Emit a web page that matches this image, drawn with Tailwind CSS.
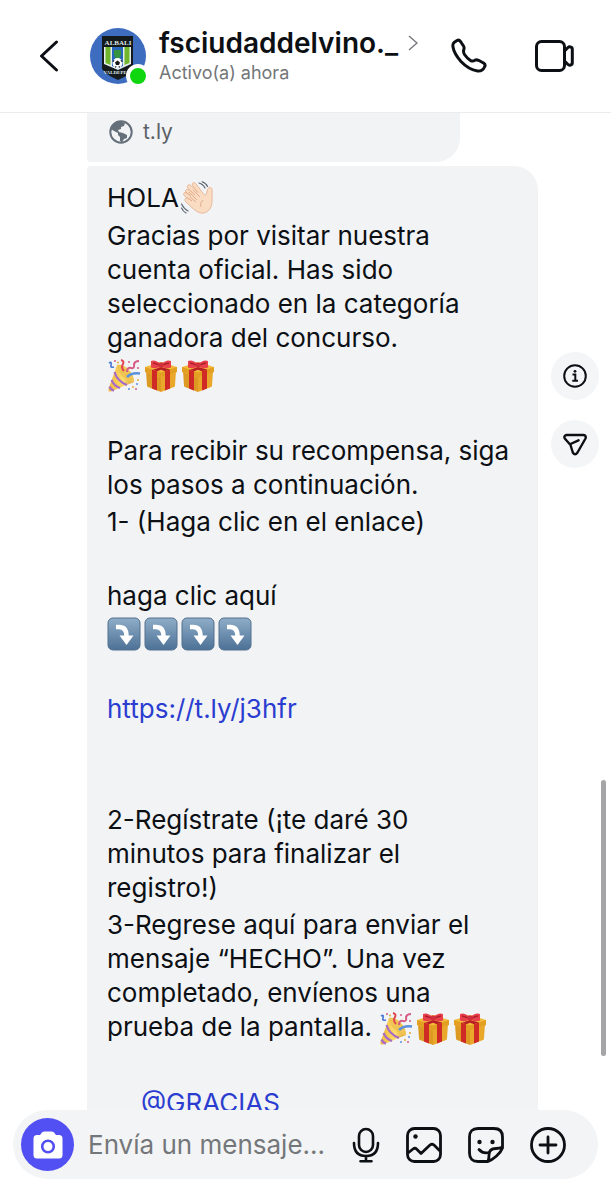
<!DOCTYPE html>
<html lang="es">
  <head>
    <title>fsciudaddelvino._</title>
    <meta charset="UTF-8">
    <meta name="viewport" content="width=device-width, initial-scale=1.0">
    <script src="https://cdn.jsdelivr.net/npm/@tailwindcss/browser@4"></script>
  </head>
  <body class="bg-white text-[#0c1014] font-['Inter','Liberation_Sans',sans-serif]">
    <!-- emoji shapes, used in the messages -->
    <svg class="absolute size-0" aria-hidden="true">
      <defs>
        <linearGradient id="keyFill" x1="0" y1="0" x2="0" y2="1">
          <stop offset="0" stop-color="#8fadc8"/>
          <stop offset="1" stop-color="#4c7196"/>
        </linearGradient>
        <linearGradient id="cone" x1="0" y1="0" x2="1" y2="0">
          <stop offset="0" stop-color="#f3b93a"/>
          <stop offset="0.6" stop-color="#fbdc6e"/>
          <stop offset="1" stop-color="#dc9a2c"/>
        </linearGradient>
        <symbol id="wave" viewBox="0 0 34 34">
          <path d="M10 15L5 11.500Q3.500 9.500 5.500 8.500Q7 8 9 9.500L14 14L7 7.500Q5.500 5.500 7 4Q8.500 3 10.500 5L17 11.500L11.500 4.500Q10.500 2.500 12 1.800Q13.700 1 15 3L23 13.500Q25 15 25.500 12.500L26.500 8.500Q27.300 6 29.500 6.500Q31.500 7 31.200 10L31 19Q31.500 26 27 30Q22 34 16 30.500Q12 28 4.500 20.500Q3 18.500 4.500 17.500Q6 16.500 8 18L11 20L3.500 15Q2 13.500 3 12Q5 10.500 7 12.500Z" fill="#fadcc3" stroke="#e3ad8a" stroke-width="0.800"/>
          <path d="M8 11L16 19M12 9L19 16M9 16L15 21M22 19Q18 22 20 26" fill="none" stroke="#dfa786" stroke-width="0.900"/>
          <path d="M18 2Q22 3 24 7M21 0.800Q25 2 26.500 5.500M0.500 23Q3 28 7 30M0.500 27Q2 30.500 5 32" fill="none" stroke="#5c6670" stroke-width="1.200" stroke-linecap="round"/>
        </symbol>
        <symbol id="party" viewBox="0 0 34 34">
          <path d="M10 6L1.500 30Q1 33 4 32.500L27 23Q26 15 19 9Q14 5 10 6Z" fill="url(#cone)"/>
          <path d="M10 6Q10 12 16 18T27 23Q27 15 20 9Q14 5 10 6Z" fill="#f0c452"/>
          <path d="M7.500 13Q10 22 20 26M4.500 21Q7 27 13 29M2.500 27.500Q4 31 7 31.500" fill="none" stroke="#a66bc9" stroke-width="2.200"/>
          <path d="M2 4Q5 2 4 6Q3 9 7 8" fill="none" stroke="#4d79d8" stroke-width="1.700"/>
          <path d="M14 1Q18 2 15.500 6Q14 9 17 12" fill="none" stroke="#e0454f" stroke-width="2"/>
          <path d="M20 13Q20 8 24 9T27 5Q28 2 32 2" fill="none" stroke="#d75a83" stroke-width="2"/>
          <path d="M20 18Q25 13 33 14.500" fill="none" stroke="#5a91dd" stroke-width="2.500"/>
          <g fill="#d75a83"><circle cx="8" cy="2" r="1"/><circle cx="22" cy="3" r="1"/><circle cx="31" cy="9" r="1"/><circle cx="29" cy="30" r="1"/></g>
          <g fill="#e0ac37"><circle cx="31" cy="21" r="1"/><circle cx="26" cy="28" r="1"/><circle cx="11" cy="3.500" r="1"/></g>
          <g fill="#5a91dd"><circle cx="30" cy="25" r="1"/><circle cx="22" cy="30" r="1"/></g>
        </symbol>
        <symbol id="gift" viewBox="0 0 34 34">
          <path d="M2 12L17 17V33L4 28Q3 27.500 3 26.500Z" fill="#dd9a22"/>
          <path d="M32 12L17 17V33L30 28Q31 27.500 31 26.500Z" fill="#e9a829"/>
          <path d="M1 8L17 3L33 8V13L17 18.500L1 13Z" fill="#f3bb3c"/>
          <path d="M1 8L17 13.500L33 8V13L17 18.500L1 13Z" fill="#e39f22"/>
          <path d="M8 10.500L13 12.200V31.500L8 29.600ZM21 12.200L26 10.500V29.600L21 31.500Z" fill="#cf2a26"/>
          <path d="M17 8L9 10.700L13 12.200L17 10.800L21 12.200L26 10.500Z" fill="#b71f24"/>
          <path d="M17 5Q11 0 7 2V8.500Q12 10.500 17 7Q22 10.500 27 8.500V2Q23 0 17 5Z" fill="#e8414b"/>
          <path d="M9 4Q12 4.500 15 6M25 4Q22 4.500 19 6" fill="none" stroke="#ae1f2c" stroke-width="1.300"/>
          <rect x="14.500" y="3.500" width="5" height="5" rx="1.500" fill="#d22f3c"/>
        </symbol>
        <symbol id="down" viewBox="0 0 34 34">
          <rect x="1" y="1" width="32" height="32" rx="5" fill="url(#keyFill)" stroke="#52708e"/>
          <path d="M9 10H12Q19.500 10 19.500 19" fill="none" stroke="#fff" stroke-width="4.500"/>
          <path d="M12.500 18.500H26.500L19.500 28Z" fill="#fff"/>
        </symbol>
      </defs>
    </svg>

    <div class="relative flex h-screen flex-col overflow-hidden">
      <header class="flex h-[113px] shrink-0 items-center border-b border-[#ececee] pr-[37px] pl-9">
        <button type="button" aria-label="Atrás" class="mr-[30px] shrink-0">
          <svg class="block h-8 w-6" viewBox="0 0 24 32" fill="none" stroke="currentColor" stroke-width="3" stroke-linecap="round" stroke-linejoin="round"><path d="M20.500 2L5.500 16L20.500 30"/></svg>
        </button>
        <div class="relative mr-[13px] shrink-0">
          <svg class="block size-14" viewBox="0 0 56 56" role="img" aria-label="Foto de perfil">
            <circle cx="28" cy="28" r="28" fill="#3e6dc0"/>
            <path d="M12 8H43V41Q40 47 28 52Q16 47 12 41Z" fill="#14191c"/>
            <path d="M14 19H41V36L28 42L14 36Z" fill="#e6eef0"/>
            <path d="M15.500 19H20.500V37L15.500 35ZM34.500 19H39.500V35L34.500 37Z" fill="#71b62b"/>
            <path d="M22 19H33V38L28 40L22 38Z" fill="#2766ba"/>
            <path d="M24 22H31V27Q30 30 27.500 32Q24 29 24 26Z" fill="#35953f"/>
            <circle cx="27.500" cy="35" r="5" fill="#fff"/>
            <path d="M27.500 32.500L30 34.500L29 37H26L25 34.500Z" fill="#151515"/>
            <path d="M23 34L24 32M32 34L31 32M25.500 39.500L26 38M29.500 39.500L29 38" stroke="#151515"/>
            <text x="28" y="17" text-anchor="middle" font-family="Liberation Serif" font-weight="bold" font-size="7" fill="#dfe5e8">ALBALI</text>
            <text x="27" y="46" text-anchor="middle" font-family="Liberation Serif" font-weight="bold" font-size="5" fill="#dfe5e8">VALDEPEÑ</text>
          </svg>
          <span class="absolute -right-1 -bottom-1 size-6 rounded-full border-4 border-white bg-[#0fd60f]"></span>
        </div>
        <div class="min-w-0 flex-1">
          <a href="#" class="flex items-center gap-[10px]">
            <span class="text-[28px] leading-8 font-semibold">fsciudaddelvino._</span>
            <svg class="h-4 w-[10px] shrink-0" viewBox="0 0 10 16" fill="none" stroke="#77797c" stroke-width="1.500"><path d="M1 1L9 8L1 15"/></svg>
          </a>
          <p class="mt-[2px] text-[18px] leading-6 text-[#737678]">Activo(a) ahora</p>
        </div>
        <button type="button" aria-label="Llamar" class="mr-12 shrink-0">
          <svg class="block size-9" viewBox="0 0 36 36" fill="none" stroke="currentColor" stroke-width="3" stroke-linejoin="round"><path d="M3 4.500L6 2.500Q8 1.500 9.500 3.500L12.500 8Q13.500 9.500 12.800 11.500Q12 14 13.500 16.500Q16.500 21 20 22.800Q22 23.500 24 22.200Q25.500 21.500 27.500 22.300L32.500 25Q35 26.500 33.500 29Q31.500 33.500 26.500 33Q17.500 31.500 10 23.500Q3 15.500 2 9Q1.500 6 3 4.500Z"/></svg>
        </button>
        <button type="button" aria-label="Videollamada" class="shrink-0">
          <svg class="block h-8 w-[39px]" viewBox="0 0 39 32" fill="none" stroke="currentColor" stroke-width="3" stroke-linejoin="round"><rect x="1.500" y="1.500" width="28" height="29" rx="5"/><path d="M29.500 11L33 7.500Q34 6.500 35.500 7Q37.300 7.500 37.300 9V23Q37.300 24.500 35.500 25Q34 25.500 33 24.500L29.500 21Z"/></svg>
        </button>
      </header>

      <main class="min-h-0 flex-1 overflow-hidden pl-[87px]">
        <div class="mr-[151px] flex items-center gap-2 rounded-br-3xl rounded-bl bg-[#f2f3f5] px-5 pt-px pb-3">
          <svg class="my-1 size-7 p-[2px]" viewBox="0 0 24 24" role="img" aria-label="Enlace"><circle cx="12" cy="12" r="10.700" fill="#f2f3f5" stroke="#65707a" stroke-width="2"/><path d="M2 7Q5 1.500 12 1.500L16 3L15 6L12 7V9L9 10L10 12L14 13L18 15L18 18L15 19L13 22.500L11 21V17L9 15V13L5 11L2 9Z" fill="#65707a"/></svg>
          <a href="#" class="text-[21px] leading-7 text-[#5c6166]">t.ly</a>
        </div>

        <div class="mt-1 flex items-start gap-[13px] pr-3">
          <article class="flex min-w-0 flex-1 flex-col gap-[3px] rounded-tl rounded-tr-3xl bg-[#f2f3f5] pt-[14px] pr-[27px] pb-5 pl-5 text-[26px] leading-[34px]">
            <p class="flex h-9 items-center gap-[2px]">HOLA<svg class="size-[34px]" role="img" aria-label="👋🏻"><use href="#wave"/></svg></p>
            <p>Gracias por visitar nuestra cuenta oficial. Has sido seleccionado en la categoría ganadora del concurso.</p>
            <p class="flex h-9 items-center gap-[3px]">
              <svg class="size-[34px]" role="img" aria-label="🎉"><use href="#party"/></svg>
              <svg class="size-[34px]" role="img" aria-label="🎁"><use href="#gift"/></svg>
              <svg class="size-[34px]" role="img" aria-label="🎁"><use href="#gift"/></svg>
            </p>
            <p><br></p>
            <p>Para recibir su recompensa, siga los pasos a continuación.</p>
            <p>1- (Haga clic en el enlace)</p>
            <p><br></p>
            <p>haga clic aquí</p>
            <p class="flex h-9 items-center gap-[3px]">
              <svg class="size-[34px]" role="img" aria-label="⤵️"><use href="#down"/></svg>
              <svg class="size-[34px]" role="img" aria-label="⤵️"><use href="#down"/></svg>
              <svg class="size-[34px]" role="img" aria-label="⤵️"><use href="#down"/></svg>
              <svg class="size-[34px]" role="img" aria-label="⤵️"><use href="#down"/></svg>
            </p>
            <p><br></p>
            <p><a href="#" class="text-[#2b3dd0]">https://t.ly/j3hfr</a></p>
            <p><br></p>
            <p><br></p>
            <p>2-Regístrate (¡te daré 30 minutos para finalizar el registro!)</p>
            <p>3-Regrese aquí para enviar el mensaje “HECHO”. Una vez completado, envíenos una prueba de la pantalla.
              <span class="inline-flex gap-[3px] align-middle">
                <svg class="size-[34px]" role="img" aria-label="🎉"><use href="#party"/></svg>
                <svg class="size-[34px]" role="img" aria-label="🎁"><use href="#gift"/></svg>
                <svg class="size-[34px]" role="img" aria-label="🎁"><use href="#gift"/></svg>
              </span>
            </p>
            <p><br></p>
            <p class="pl-[34px]"><a href="#" class="text-[#2b3dd0]">@GRACIAS</a></p>
          </article>
          <div class="flex shrink-0 flex-col gap-5 pt-[186px]">
            <button type="button" aria-label="Información" class="flex size-12 items-center justify-center rounded-full bg-[#f4f5f6]">
              <svg class="size-6" viewBox="0 0 24 24" fill="none" stroke="currentColor" stroke-width="2"><circle cx="12" cy="12" r="10.800"/><path d="M9.500 10.500H12.300V16.500M9.300 16.800H15"/><circle cx="12" cy="7.300" r="1.400" fill="currentColor" stroke="none"/></svg>
            </button>
            <button type="button" aria-label="Reenviar" class="flex size-12 items-center justify-center rounded-full bg-[#f4f5f6]">
              <svg class="size-6" viewBox="0 0 24 24" fill="none" stroke="currentColor" stroke-width="2.400" stroke-linejoin="round" stroke-linecap="round"><path d="M3.500 3H20.500Q23.500 3.500 22.500 6.500L14.500 20.500Q12 24 9.800 20.500L7.500 13L1.800 6.500Q0.500 3.700 3.500 3ZM7.500 12L15.500 8.300"/></svg>
            </button>
          </div>
        </div>
      </main>

      <footer class="shrink-0 px-[13px] pb-[21px]">
        <form class="flex items-center rounded-full bg-[#f3f4f5] py-2 pr-8 pl-2">
          <button type="button" aria-label="Cámara" class="mr-[14px] flex size-[53px] shrink-0 items-center justify-center rounded-full bg-[#5350f3]">
            <svg class="h-7 w-[30px]" viewBox="0 0 30 28"><path d="M4 4H7L9 1.500Q10 0.500 11.500 0.500H18.500Q20 0.500 21 1.500L23 4H26Q29.500 4 29.500 7.500V24Q29.500 27.500 26 27.500H4Q0.500 27.500 0.500 24V7.500Q0.500 4 4 4Z" fill="#fff"/><circle cx="15" cy="15.500" r="5.800" fill="none" stroke="#5350f3" stroke-width="2.600"/></svg>
          </button>
          <input type="text" aria-label="Mensaje" placeholder="Envía un mensaje..." class="min-w-0 flex-1 text-[26px] leading-9 outline-none placeholder:text-[#74777a]">
          <div class="flex shrink-0 items-center gap-[26px]">
            <button type="button" aria-label="Mensaje de voz">
              <svg class="block h-9 w-7" viewBox="0 0 28 36" fill="none" stroke="currentColor" stroke-width="2.600" stroke-linecap="round"><rect x="7" y="2" width="14" height="23" rx="7"/><path d="M2 16Q2 29 14 29Q26 29 26 16M14 29V34M8.500 34.300H19.500"/></svg>
            </button>
            <button type="button" aria-label="Foto">
              <svg class="block size-9" viewBox="0 0 36 36" fill="none" stroke="currentColor" stroke-width="2.800" stroke-linejoin="round"><rect x="1.500" y="1.500" width="33" height="33" rx="7"/><circle cx="9.500" cy="9.500" r="2.200" fill="currentColor" stroke="none"/><path d="M2 26L7 22Q9 20.500 10.500 22L15 26.500L24 18Q26 16.500 28 18L34 24"/></svg>
            </button>
            <button type="button" aria-label="Sticker">
              <svg class="block size-9" viewBox="0 0 36 36" fill="none" stroke="currentColor" stroke-width="2.800" stroke-linejoin="round" stroke-linecap="round"><path d="M20 34.500H10Q1.500 34.500 1.500 26V10Q1.500 1.500 10 1.500H26Q34.500 1.500 34.500 10V21Q33 25 28.500 29T20 34.500Q21 32 21 28Q21 21.500 28 21.500Q32 21.500 34.500 20"/><path d="M11 22.500Q15 27 21 25.500"/><g fill="currentColor" stroke="none"><circle cx="11.500" cy="15" r="2.200"/><circle cx="24.500" cy="15" r="2.200"/></g></svg>
            </button>
            <button type="button" aria-label="Más">
              <svg class="block size-9" viewBox="0 0 36 36" fill="none" stroke="currentColor" stroke-width="2.800" stroke-linecap="round"><circle cx="18" cy="18" r="16.500"/><path d="M18 10V26M10 18H26"/></svg>
            </button>
          </div>
        </form>
      </footer>

      <!-- scroll thumb -->
      <div class="absolute top-[65%] right-[5px] h-[23%] w-[5px] rounded-full bg-[#a5a5a7]"></div>
    </div>
  </body>
</html>
